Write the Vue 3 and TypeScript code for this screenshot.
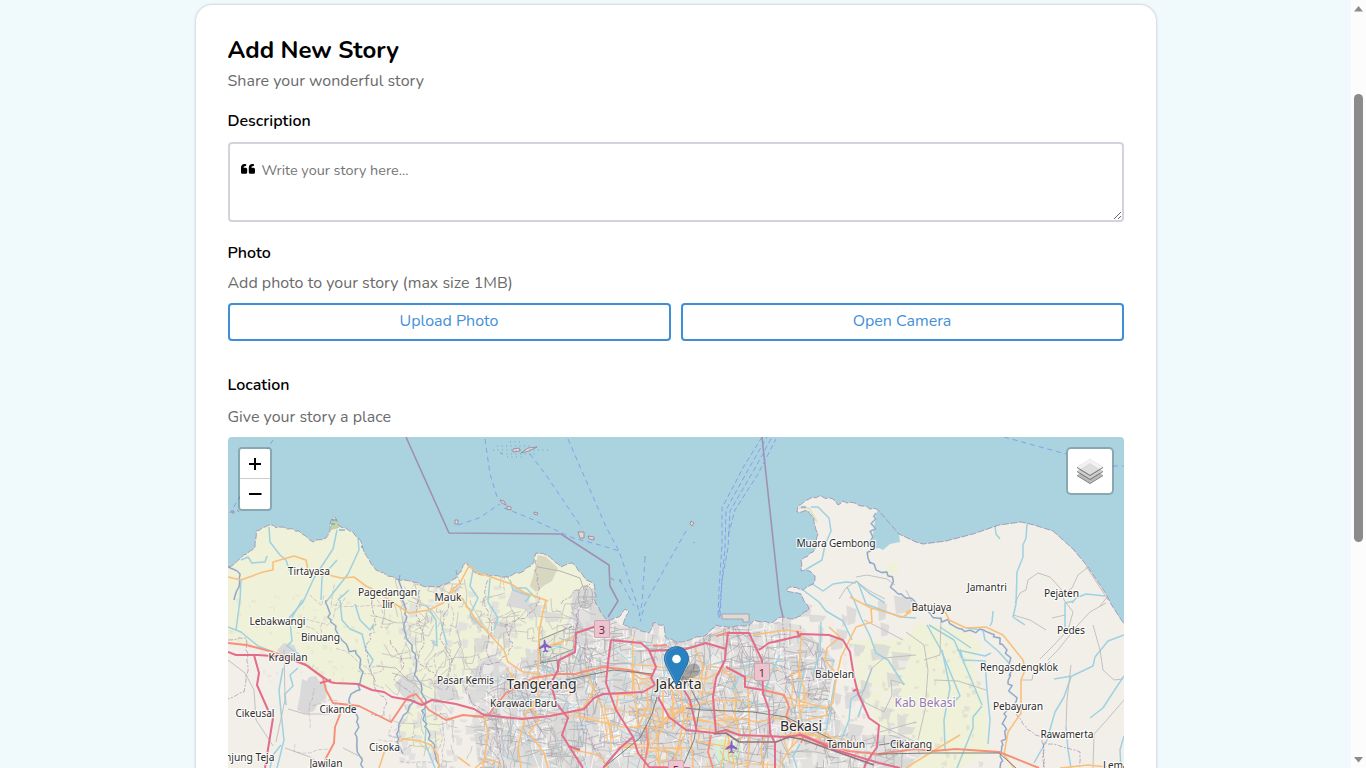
<script setup lang="ts">
interface Line { d: string }
interface Label { t: string; x: number; y: number; w: number; s?: number; c?: string }
type Pt = [number, number]

// Small seeded generator so the street texture is the same on every load.
function makeRandom(seed: number): () => number {
  let s = seed
  return () => {
    s = (s * 1664525 + 1013904223) % 4294967296
    return s / 4294967296
  }
}

function streets(seed: number, count: number, box: number[], step: number, turn: number): string {
  const rnd = makeRandom(seed)
  let d = ''
  for (let i = 0; i < count; i++) {
    let x = box[0] + rnd() * (box[2] - box[0])
    let y = box[1] + rnd() * (box[3] - box[1])
    let a = Math.floor(rnd() * 4) * Math.PI / 2 + (rnd() - 0.5) * 0.7
    d += `M${x.toFixed(1)} ${y.toFixed(1)}`
    const n = 2 + Math.floor(rnd() * 4)
    for (let k = 0; k < n; k++) {
      a += (rnd() - 0.5) * turn
      if (rnd() < 0.25) a += Math.PI / 2
      const len = step * (0.5 + rnd())
      x += Math.cos(a) * len
      y += Math.sin(a) * len
      d += `L${x.toFixed(1)} ${y.toFixed(1)}`
    }
  }
  return d
}

function patches(seed: number, count: number, box: number[], size: number): string {
  const rnd = makeRandom(seed)
  let d = ''
  for (let i = 0; i < count; i++) {
    const x = box[0] + rnd() * (box[2] - box[0])
    const y = box[1] + rnd() * (box[3] - box[1])
    const w = size * (0.3 + rnd())
    const h = size * (0.3 + rnd())
    d += `M${x.toFixed(1)} ${y.toFixed(1)}l${w.toFixed(1)} ${(h * 0.2).toFixed(1)}l${(-w * 0.2).toFixed(1)} ${(h * 0.7).toFixed(1)}l${(-w * 0.7).toFixed(1)} ${(h * 0.1).toFixed(1)}z`
  }
  return d
}

// Adds a fine wiggle between the points of a coast, border or river.
function rough(seed: number, pts: Pt[], amp: number): string {
  const rnd = makeRandom(seed)
  let d = `M${pts[0][0]} ${pts[0][1]}`
  for (let i = 1; i < pts.length; i++) {
    const [ax, ay] = pts[i - 1]
    const [bx, by] = pts[i]
    const n = Math.max(1, Math.round(Math.hypot(bx - ax, by - ay) / 4))
    for (let k = 1; k < n; k++) {
      const t = k / n
      d += `L${(ax + (bx - ax) * t + (rnd() - 0.5) * amp).toFixed(1)} ${(ay + (by - ay) * t + (rnd() - 0.5) * amp).toFixed(1)}`
    }
    d += `L${bx} ${by}`
  }
  return d
}

const coastPts: Pt[] = [
  [228, 568], [241, 558], [250, 551], [255, 547], [256, 531], [269, 525], [299, 531], [313, 542], [326, 538], [330, 531], [331, 520], [335, 517], [339, 526], [353, 532], [361, 541], [364, 552], [376, 570], [396, 579], [413, 582], [426, 587], [439, 587], [456, 578], [466, 562], [474, 572], [489, 576], [509, 577], [524, 571], [534, 562], [536, 553], [546, 555], [561, 567], [572, 563], [584, 577], [594, 584], [596, 604], [603, 615], [608, 620], [619, 617], [625, 609], [629, 612], [623, 625], [639, 630], [649, 633], [653, 623], [664, 625], [665, 637], [676, 642], [686, 641], [694, 638], [706, 635], [716, 625], [732, 627], [749, 625], [754, 620], [769, 623], [783, 617], [794, 619], [803, 613], [809, 610], [804, 601], [801, 594], [786, 591], [789, 587], [803, 590], [813, 584], [815, 576], [810, 571], [801, 571], [801, 560], [813, 552], [816, 544], [818, 534], [814, 519], [808, 511], [797, 512], [798, 506], [809, 499], [819, 496], [833, 499], [838, 505], [843, 501], [863, 506], [878, 510],
]
const eastCoast = 'L899 534 916 542 923 544 946 541 973 534 999 525 1021 522 1034 525 1053 531 1073 549 1088 567 1106 594 1111 604 1124 624'
const coast = rough(7, coastPts, 2.2) + eastCoast
const land = coast + 'V768H228Z'
const urban = 'M480 768 472 720 490 680 530 665 558 640 576 605 596 600 620 625 690 645 720 628 780 622 800 625 835 660 828 700 850 735 905 735 925 752 905 768Z'

const motorways: Line[] = [
  { d: 'M228 652 236 655 258 655 286 657 306 665 330 682 335 683 358 684 372 690 384 692 392 697 410 700 422 705 432 700 456 704 474 709 484 715 522 719 550 716 584 709 594 698 603 694 643 692 655 685 651 678 656 667 649 650 641 643 611 640' },
  { d: 'M649 651 686 649 706 643 726 649 725 660 716 678 713 697 716 733' },
  { d: 'M726 649 728 633 749 633 758 652 762 660 763 693 769 710 770 733 775 743V768' },
  { d: 'M603 624 594 627 576 633 575 652 559 660 558 670 551 683 556 703 568 718 562 735 583 768' },
  { d: 'M611 640 608 663 606 683 616 710 633 737 638 753 649 767 690 768' },
  { d: 'M658 697 669 717 686 730 714 733 726 730 739 735 786 737 801 735 836 750 879 763 900 768' },
  { d: 'M759 650 769 643 799 636 801 634 829 635 843 640 850 652 854 677 858 693 869 718 879 725 877 747 866 763 864 768' },
  { d: 'M726 667 745 677 745 687 763 690M853 691 858 689M797 631 800 637' },
  { d: 'M254 655 259 673 257 685 268 710 273 718 269 743 265 768M568 746 580 750M320 683 331 680' },
  { d: 'M633 737 620 748 603 768M684 690 690 700 694 718 697 732' },
]
const trunks: Line[] = [
  { d: 'M228 643 246 645 273 652 306 665 323 678 326 690 333 703 359 706 373 713 391 722 408 697 416 694 429 710 446 720 463 715 484 717' },
  { d: 'M341 712 335 727 334 743 326 758 322 768' },
  { d: 'M488 715 506 693 533 678 559 674 575 674 603 667 629 670 653 676' },
  { d: 'M646 727 648 744 644 768M716 636 730 632M653 646 667 645' },
  { d: 'M763 690 784 695 789 707 786 717 803 737 801 743M711 735 708 752 713 768' },
  { d: 'M803 735 820 742 848 751 878 754 916 749 933 751 956 749 970 750 999 752 1039 768' },
]
const secondary: Line[] = [
  { d: 'M228 577 241 580 263 572 273 570 273 562 294 556 306 560 308 570 341 578 354 577 366 586 378 592 389 600 409 613 429 610 443 603 451 591 460 583 469 566 476 572 491 577 511 584 523 592 548 601' },
  { d: 'M451 588 463 600 476 620 504 650 508 662 523 672 538 674' },
  { d: 'M546 600 543 612 539 633 538 670 538 700 526 713 518 747 521 768' },
  { d: 'M531 707 539 720 529 733 544 753 548 768M506 668 520 685 545 682 565 688 571 694' },
  { d: 'M578 707 579 717 623 727 656 728 686 708 714 700 743 701M484 715 488 733 483 768' },
  { d: 'M906 613 915 607 932 605 946 613 949 620 966 628 986 627 1003 635 1023 660 1025 670 1021 680V700L1021 713 1008 732 1004 755 1014 768' },
  { d: 'M850 597 871 608 903 617 916 608M871 608 872 622 856 627 841 657 835 685 833 703M829 627 840 637 827 648 825 660 835 672' },
  { d: 'M753 635 786 630 801 632 799 677 804 687 804 700M784 697 826 708 827 715 806 720M826 708 833 703' },
  { d: 'M398 742 404 739 420 741 431 745 438 755 439 768M385 750 379 768M458 757 470 766' },
  { d: 'M906 768 933 751 960 735M1060 768 1088 765 1107 767' },
  { d: 'M610 694 632 695 634 672M618 695 616 712M629 671 641 679 653 678M638 727 648 706 647 688M656 728 667 717 677 712 686 705' },
  { d: 'M673 730V692L660 681M681 690 684 720 673 768M694 646 703 666 700 691M713 721 742 719 757 722 790 716' },
  { d: 'M736 690 735 716 741 740M748 687 750 740 747 768M765 734 761 748 763 768M801 737 788 751 779 768M813 741 826 733 841 746' },
  { d: 'M686 677 706 679 722 671 736 679M686 719 710 722M691 735 693 768M656 728 660 768M663 690 663 728 652 745' },
  { d: 'M574 750 589 753 601 756 608 768M475 768 486 759 498 762 501 768M595 684 590 698 580 712M618 747 650 748 690 748' },
]
const rivers: Line[] = [
  { d: 'M269 527 270 542 280 555 286 560 290 572M241 560 248 557 252 563 265 562 267 556M337 530 333 549 314 578 303 602 289 618M241 580 240 600 236 630' },
  { d: 'M358 537 359 550 348 574 326 602M337 560 322 577 321 600M349 590 338 600M302 600 294 614 290 622 292 641 287 646 300 655' },
  { d: 'M228 627 241 632 258 646 273 652M283 668 279 690 281 712 284 740 277 768M298 668 290 675 293 686 285 694 286 705M270 768 273 755 281 745' },
  { d: 'M340 600 342 620 350 629 362 634 366 650 373 660 369 668M355 604 360 620 370 630 374 624M427 606 436 620 437 646 432 642M441 622 447 645' },
  { d: 'M473 570 470 586 478 598 470 615 482 628M490 578 488 602 498 618 494 630M510 580 513 590 530 596 525 602M515 588 526 588 536 598' },
  { d: 'M811 507 818 507 829 518 831 531 825 545 822 560 805 570M811 583 823 591 833 584 846 582 856 583M803 590 819 602 826 611 843 621 852 640' },
  { d: 'M847 587 854 600 861 618 870 636 876 653 888 660 904 685M856 581 869 593 885 603M858 582 866 604 900 617 916 618' },
  { d: 'M995 526 996 534 1000 539M1027 524 1026 538 1023 545 1023 557 1017 572 1016 604 1013 617 1025 625M1072 603 1076 598 1086 594 1105 596M1065 627 1065 603 1074 601' },
  { d: 'M927 625 941 650 960 696 950 706M929 625 954 640 968 672 982 705M940 627 971 648M957 650 967 652 985 656 991 653M960 649 963 660 985 661 987 690 990 720 988 744' },
  { d: 'M982 706 973 717 973 728 957 768M942 650 950 688 944 720 945 749M993 611 992 622 990 626M967 628 983 630 985 640 998 651 1009 663' },
  { d: 'M1124 635 1108 641 1095 657 1093 666 1072 676 1054 679M1071 677 1064 697 1055 712 1047 740 1034 763M1124 676 1112 694 1103 708 1090 718' },
  { d: 'M1066 727 1068 750 1071 768M1124 736 1120 750 1121 768M872 668 864 690 851 699 849 720 836 753M856 694 864 700 858 717M835 680 831 704 826 731' },
  { d: 'M780 655 770 676 765 695M821 622 820 651 813 675M738 678 733 692M804 670 798 699M800 744 793 756 797 768M425 706 426 727 425 743 435 768' },
]
const purpleRivers: string[] = [
  rough(11, [[326, 600], [331, 620], [338, 634], [348, 648], [360, 658], [361, 678], [360, 690], [351, 694], [349, 702], [358, 718], [357, 740], [363, 768]], 5),
  rough(12, [[400, 575], [405, 607], [404, 629], [412, 645], [416, 670], [421, 692], [426, 700], [423, 720], [430, 735], [438, 768]], 5),
  rough(13, [[876, 513], [871, 540], [868, 558], [876, 570], [888, 576], [894, 590], [906, 598], [916, 607], [941, 618], [962, 629], [985, 631], [1000, 638], [1007, 650], [1012, 670], [1008, 684], [1016, 702], [1004, 714], [1004, 725], [1003, 745], [1000, 768]], 6),
  rough(14, [[228, 566], [240, 574], [239, 587], [234, 600]], 2),
  rough(15, [[415, 700], [400, 722], [397, 742], [403, 754]], 3),
]
const admin: string[] = [
  rough(21, [[456, 570], [461, 585], [450, 596], [444, 620], [440, 640], [452, 660], [446, 690]], 3),
  rough(22, [[536, 560], [537, 580], [540, 600], [528, 615], [505, 625], [512, 648], [500, 662], [482, 664], [480, 680], [466, 688], [474, 705], [489, 714], [500, 738], [498, 768]], 4),
  rough(23, [[561, 604], [576, 590], [590, 584], [578, 612], [576, 640], [590, 660], [600, 690], [585, 705], [582, 728], [598, 750], [610, 768]], 4),
  rough(24, [[783, 617], [785, 650], [786, 690], [776, 712], [764, 730], [763, 768]], 3),
  rough(25, [[786, 680], [810, 678], [808, 698], [829, 700], [828, 716]], 2),
  rough(26, [[228, 640], [246, 638], [248, 668], [244, 692], [228, 699]], 2),
  rough(27, [[372, 600], [376, 625], [366, 646], [376, 690], [386, 700], [384, 716], [371, 714]], 4),
  rough(28, [[1016, 713], [1028, 730], [1042, 738], [1044, 768], [1044, 742], [1080, 752], [1080, 768]], 2),
  rough(29, [[664, 690], [690, 705], [688, 740], [700, 768]], 4),
  rough(30, [[390, 640], [404, 664], [394, 680], [412, 694]], 3),
  rough(31, [[488, 580], [484, 604], [492, 624], [486, 650], [492, 664]], 3),
  rough(32, [[420, 590], [416, 612], [424, 640], [418, 660], [436, 676]], 3),
]
const greyRoads: Line[] = [
  { d: 'M228 660 245 673 254 690 256 720 266 735 273 746M284 650 285 700 276 742' },
  { d: 'M1015 603 1020 593 1026 590 1028 580 1038 573 1050 577 1061 589 1064 600 1073 612 1068 630 1051 648 1040 659M1088 567 1078 575 1072 588 1062 595' },
  { d: 'M1124 700 1105 722 1094 734 1093 768M1071 665 1067 700 1066 727M1106 603 1090 612 1077 626 1058 650 1048 660M1100 606 1108 596M1052 618 1065 615' },
  { d: 'M1025 670 1046 666 1050 661M1021 680 1032 680 1033 674M1013 615 1030 620 1046 630M1093 625 1100 650 1103 670 1114 680 1123 679M1086 566 1108 600' },
  { d: 'M906 632 924 645 928 670 925 710 918 740M934 680 958 681 986 690M864 620 884 630 903 640M916 655 884 658 872 668 860 700 884 712 892 695 891 680 905 684' },
  { d: 'M856 577 867 575 887 579 895 585M856 581 846 588 839 599M856 581 868 590 885 599M392 673 402 676 415 684 M376 666 396 668 408 680M288 709 305 714 330 714' },
  { d: 'M285 748 310 757 326 768M343 748 363 758M906 590 912 602M941 618 940 655 924 660M880 732 916 722M879 725 916 742M457 630 461 645 450 665' },
]
const labels: Label[] = [
  { t: 'Tirtayasa', x: 309, y: 574.6, w: 42 }, { t: 'Pagedangan', x: 387.5, y: 596.4, w: 59 }, { t: 'Ilir', x: 388, y: 608.4, w: 12 },
  { t: 'Mauk', x: 448, y: 601, w: 27 }, { t: 'Lebakwangi', x: 277.5, y: 624.7, w: 56 }, { t: 'Binuang', x: 320.5, y: 641.2, w: 39 },
  { t: 'Kragilan', x: 288, y: 661.3, w: 39 }, { t: 'Cikeusal', x: 255, y: 717.4, w: 39 }, { t: 'Cikande', x: 338, y: 712.6, w: 37 },
  { t: 'Cisoka', x: 384.5, y: 750.7, w: 31 }, { t: 'Jawilan', x: 326, y: 766.6, w: 33 }, { t: 'Tanjung Teja', x: 244.5, y: 760.5, w: 60 },
  { t: 'Pasar Kemis', x: 465.5, y: 683.8, w: 57 }, { t: 'Karawaci Baru', x: 523.5, y: 706.8, w: 67 }, { t: 'Muara Gembong', x: 836, y: 547.4, w: 79 },
  { t: 'Jamantri', x: 987, y: 590.8, w: 40 }, { t: 'Pejaten', x: 1061.5, y: 596.6, w: 35 }, { t: 'Batujaya', x: 931.5, y: 611.4, w: 40 },
  { t: 'Pedes', x: 1071, y: 633.6, w: 28 }, { t: 'Rengasdengklok', x: 1019, y: 670.8, w: 78 }, { t: 'Pebayuran', x: 1018, y: 709.6, w: 50 },
  { t: 'Rawamerta', x: 1067, y: 737.6, w: 53 }, { t: 'Lemahabang', x: 1133, y: 768.6, w: 60 }, { t: 'Babelan', x: 834.5, y: 678, w: 39 },
  { t: 'Tambun', x: 846, y: 747.6, w: 38 }, { t: 'Cikarang', x: 911, y: 747.6, w: 42 },
  { t: 'Kab Bekasi', x: 925, y: 707, w: 61, s: 12, c: '#9a7aae' },
  { t: 'Tangerang', x: 541.5, y: 689, w: 70, s: 14 }, { t: 'Jakarta', x: 678.5, y: 689, w: 46, s: 14 }, { t: 'Bekasi', x: 801, y: 731, w: 42, s: 14 },
]
const shields = [{ t: '3', x: 602, y: 629 }, { t: '1', x: 762, y: 672 }, { t: '5', x: 676, y: 769 }]
const planes = [{ x: 545, y: 646, r: -5 }, { x: 731.5, y: 747, r: 0 }]

const urbanStreets = streets(3, 720, [480, 600, 925, 768], 7, 0.4)
const urbanLight = streets(4, 300, [480, 600, 925, 768], 7, 0.4)
const urbanBorders = streets(19, 70, [480, 620, 880, 768], 8, 1)
const urbanPatches = patches(5, 260, [465, 595, 900, 768], 16)
const urbanOpen = patches(6, 130, [480, 640, 900, 768], 10)
const ruralStreets = streets(8, 190, [395, 585, 600, 768], 7, 0.8)
const ruralBorders = streets(20, 40, [300, 590, 520, 768], 8, 1)
const ruralPatches = patches(9, 170, [395, 585, 560, 768], 8)
const westPatches = patches(10, 80, [228, 590, 400, 680], 4)
const eastPatches = patches(16, 90, [835, 640, 985, 768], 5)
const urbanRoads = streets(17, 36, [600, 675, 830, 768], 14, 0.4)
const canals = streets(18, 70, [480, 640, 900, 768], 9, 0.8)
const ferries = [
  'M485 439 490 474 498 500M458 525 479 518 500 504M504 508 527 517 573 538 600 545 619 551M530 454 546 475 582 528M568 439 591 492 606 527 619 551 637 604 640 616',
  'M686 531 665 568 645 604 640 622M645 558 642 604 639 616M620 580 634 606M1004 437 1066 454M1113 466H1124M273 440 266 451M241 495 230 513',
]
const lanes = [
  'M762 437 744 466 722 508 722 545 719 590 718 618', 'M767 437 748 470 726 510 725 548 721 592 719 618',
  'M772 437 754 470 730 511 728 548 722 580 720 618', 'M776 439 758 474 735 510 728 536',
]
</script>

<template>
  <div class="page">
    <main class="content">
      <section class="card">
        <h1>Add New Story</h1>
        <p class="hint lead">Share your wonderful story</p>

        <label class="label desc" for="story">Description</label>
        <div class="story-field">
          <svg class="quote" viewBox="0 0 14 10" width="14" height="10">
            <path d="M0 3.8Q0 .2 3.6 0H4.6Q5.2 0 5.2.6V1.3Q5.2 2 4.5 2 2.5 2 2.5 3.7H4.7Q6.2 3.7 6.2 5.2V8.3Q6.2 9.8 4.7 9.8H1.5Q0 9.8 0 8.3Z" />
            <path transform="translate(7.8)" d="M0 3.8Q0 .2 3.6 0H4.6Q5.2 0 5.2.6V1.3Q5.2 2 4.5 2 2.5 2 2.5 3.7H4.7Q6.2 3.7 6.2 5.2V8.3Q6.2 9.8 4.7 9.8H1.5Q0 9.8 0 8.3Z" />
          </svg>
          <textarea id="story" placeholder="Write your story here..."></textarea>
        </div>

        <h2 class="label photo">Photo</h2>
        <p class="hint photo-hint">Add photo to your story (max size 1MB)</p>
        <div class="actions">
          <button type="button">Upload Photo</button>
          <button type="button">Open Camera</button>
        </div>

        <h2 class="label location">Location</h2>
        <p class="hint place-hint">Give your story a place</p>

        <div class="map">
          <svg class="tiles" viewBox="228 437 896 331" width="896" height="331">
            <defs>
              <clipPath id="land"><path :d="land" /></clipPath>
              <clipPath id="urban"><path :d="urban" /></clipPath>
            </defs>
            <rect x="228" y="437" width="896" height="331" fill="#aad3df" />
            <path :d="land" fill="#f2efe9" />
            <g clip-path="url(#land)">
              <path d="M228 500H600V640L560 655 505 663 470 688 440 698 400 693 362 684 335 682 300 661 270 653 228 640Z" fill="#eff1d8" />
              <path d="M396 725 405 718 412 706 440 718 444 745 425 752 402 743Z" fill="#eff1d8" />
              <path d="M853 640 906 639 918 622 966 630 982 645 972 661 985 700 989 750 960 768H906L880 730 858 690Z" fill="#eff1d8" />
              <path d="M884 567 897 562 899 573 887 574Z" fill="#eff1d8" />
              <path :d="westPatches" fill="#dfe3d2" opacity=".6" />
              <path :d="eastPatches" fill="#dedbd3" opacity=".75" />
              <path :d="ruralPatches" fill="#dcdcdc" opacity=".75" />
              <path d="M277 650 284 643 294 645 300 659 282 658ZM302 679 307 681 309 677 316 676 319 681 327 685 326 699 317 705 314 711 306 714 297 710 300 695Z" fill="#d9d9d9" />
              <path d="M394 685 402 676 414 675 420 695 408 703ZM433 680 452 678 460 700 440 700ZM470 672 492 654 510 668 500 692 476 691Z" fill="#dadada" />
              <path :d="urban" fill="#e3e1df" />
              <path :d="urbanPatches" fill="#d5d5d5" opacity=".75" />
              <path :d="urbanOpen" fill="#f2efe9" opacity=".7" />
              <path d="M538 555 546 557 558 568 552 581 545 585 536 592 530 586 534 573Z" fill="#d2d1bd" opacity=".8" />
              <path d="M573 590 596 588 595 608 571 610ZM514 585 530 595 528 610 506 606Z" fill="#d9d9d9" />
              <path d="M539 640 573 626 574 649 541 662Z" fill="#e6ead7" stroke="#75756f" stroke-width=".8" />
              <path d="M548 648 573 638M550 645 568 640" stroke="#fbc27c" stroke-width="1.5" />
              <path d="M714 742 728 736 742 743 739 760 718 764Z" fill="#d9eed0" />
              <path d="M330 517 337 520 339 528 331 530Z" fill="#c4d3a5" />
              <path d="M799 508 809 508 817 522" fill="none" stroke="#dfe4b8" stroke-width="2" />
              <g fill="none" clip-path="url(#urban)">
                <path :d="urbanLight" stroke="#fff" stroke-width="1" opacity=".8" />
                <path :d="urbanStreets" stroke="#b3b1b3" stroke-width=".8" />
                <path :d="urbanBorders" stroke="#a58fb0" stroke-width=".8" opacity=".65" />
                <path :d="canals" stroke="#9fcfdf" stroke-width="1" opacity=".8" />
                <path :d="urbanRoads" stroke="#fbc27c" stroke-width="1.2" />
              </g>
              <path :d="ruralStreets" fill="none" stroke="#bdbbbd" stroke-width=".7" />
              <path :d="ruralBorders" fill="none" stroke="#a58fb0" stroke-width=".8" stroke-dasharray="4 1.5" opacity=".5" />
            </g>
            <path d="M878 510 899 534 900 542 890 544 883 550 879 548 871 549 876 514Z" fill="#aad3df" />
            <path d="M722 614H749V622H743V619H722Z" fill="#dedbd3" stroke="#9d7fa8" stroke-width=".6" />
            <g fill="none" stroke-linejoin="round">
              <path v-for="(r, i) in rivers" :key="'r' + i" :d="r.d" stroke="#9ed1e1" stroke-width="1.5" />
              <path v-for="(r, i) in greyRoads" :key="'g' + i" :d="r.d" stroke="#bdbbbc" stroke-width=".9" />
              <g v-for="(r, i) in purpleRivers" :key="'p' + i">
                <path :d="r" stroke="#a8cfe0" stroke-width="1.8" />
                <path :d="r" stroke="#988bae" stroke-width="1" opacity=".75" />
              </g>
              <path v-for="(a, i) in admin" :key="'a' + i" :d="a" stroke="#9d7fa8" stroke-width="1" stroke-dasharray="5 1.5 2 1.5" opacity=".6" />
              <path :d="coast" stroke="#9585a8" stroke-width="1" stroke-dasharray="7 1.5" opacity=".75" />
              <path d="M579 597a7 8 0 1 0 13 0 7 8 0 1 0-13 0M538 567 560 571 580 578 584 590M585 586V606M577 597H595" stroke="#b4b4b4" stroke-width="1" />
              <path v-for="(s, i) in secondary" :key="'s' + i" :d="s.d" stroke="#f9c07d" stroke-width="1.6" />
              <path v-for="(t, i) in trunks" :key="'t' + i" :d="t.d" stroke="#f68f76" stroke-width="1.9" />
              <path d="M540 663 557 660 558 672M566 680 613 670 653 674M686 708 703 710 753 712 786 717 819 733 845 746M657 697 652 714 640 738 618 756 603 768M686 680 700 706 694 740 682 768M878 754 933 753 999 753 1016 768M879 745 906 741" stroke="#808080" stroke-width="1" />
              <path v-for="(m, i) in motorways" :key="'m' + i" :d="m.d" stroke="#e46c88" stroke-width="2" />
              <path d="M714 734 726 733 739 742 776 742 789 737 801 739 874 765" stroke="#94747d" stroke-width="1.7" />
              <path d="M406 437 449 533 561 534 609 565 610 586 618 601 608 617M762 437 780 604 783 617" stroke="#a191b0" stroke-width="1.6" />
              <path v-for="(f, i) in ferries" :key="'f' + i" :d="f" stroke="#7d9ceb" stroke-width=".9" stroke-dasharray="5 4" />
              <path v-for="(l, i) in lanes" :key="'l' + i" :d="l" stroke="#859fec" stroke-width="1" stroke-dasharray="5 3" :stroke-dashoffset="i * 3" />
            </g>
            <g fill="#e0ddd0" stroke="#9b7b99" stroke-width=".8">
              <path d="M500 500 504 501 506 505 502 503ZM507 506 511 507 511 510 507 509ZM534 512 538 513 537 515 534 514ZM578 532H584V538H580ZM588 536 594 537 594 540 589 539ZM455 520H458V524H455ZM691 521 694 523 692 526 690 524ZM232 511H234V513H232ZM237 510 239 512" />
              <path d="M513 449 519 448 520 451 513 452ZM521 453 528 448 537 447 529 451ZM645 556V558M611 578 614 580M620 579V582M694 542V543M500 453H502" />
            </g>
            <path d="M493 450H550M497 446H533M502 454H535M510 442H520M507 457H525" stroke="#5b9fc4" stroke-width=".8" stroke-dasharray="1 3.5" />
            <path d="M332 520H337M331 524H335M339 530H345M361 547H363M801 507H806" stroke="#4d94dd" stroke-width="1" />
            <g v-for="p in planes" :key="p.x" :transform="`translate(${p.x} ${p.y}) rotate(${p.r})`" fill="#8461c4">
              <path d="M0-6.5Q1.2-6 1.1-2.3L6 1.3V2.8L1.1 1.2.7 3.9 2.8 5.4V6.4L0 5.6-2.8 6.4V5.4L-.7 3.9-1.1 1.2-6 2.8V1.3L-1.1-2.3Q-1.2-6 0-6.5Z" />
            </g>
            <g v-for="s in shields" :key="s.t">
              <rect :x="s.x - 7.5" :y="s.y - 8.5" width="15" height="17" rx="1.5" fill="#eac4cf" stroke="#d7a3b2" />
              <text :x="s.x" :y="s.y + 4.5" text-anchor="middle" font-size="11" fill="#71243e">{{ s.t }}</text>
            </g>
            <path d="M677 686 686 669Q690 662 697 664 702 668 699 675L686 681Z" fill="#222" opacity=".3" />
            <text v-for="l in labels" :key="l.t" :x="l.x" :y="l.y" :font-size="l.s || 10.3" :fill="l.c || '#2d2d2d'" :textLength="l.w" text-anchor="middle" class="place">{{ l.t }}</text>
            <g transform="translate(0 .7)">
              <path d="M676.5 646C669.8 646 664.5 651.3 664.5 658 664.5 661.7 666.5 665.3 668.2 668.4L676.5 684.8 684.8 668.4C686.5 665.3 688.5 661.7 688.5 658 688.5 651.3 683.2 646 676.5 646Z" fill="#2a81bf" stroke="#2b6d9f" stroke-width="1" />
              <path d="M676.5 647C670.4 647 665.5 652 665.5 658 665.5 661.5 667.4 664.9 669 668L676.5 682.5" fill="none" stroke="#5aa3d4" stroke-width="1" opacity=".7" />
              <circle cx="676.5" cy="658.3" r="4.3" fill="#fff" />
            </g>
          </svg>

          <div class="zoom">
            <button type="button" aria-label="Zoom in"><svg width="14" height="14"><path d="M1 7H13M7 1V13" /></svg></button>
            <button type="button" aria-label="Zoom out"><svg width="14" height="14"><path d="M1 7H13.5" /></svg></button>
          </div>
          <button type="button" class="layers" aria-label="Layers">
            <svg width="26" height="26" viewBox="0 0 26 26">
              <path fill="#b9b9b9" d="m.032 17.056 13-8 13 8-13 8z" /><path fill="#737373" d="m.032 17.056-.032.93 13 8 13-8 .032-.93-13 8z" />
              <path fill="#cdcdcd" d="m0 13.076 13-8 13 8-13 8z" /><path fill="#737373" d="M0 13.076v.91l13 8 13-8v-.91l-13 8z" />
              <path fill="#e9e9e9" fill-opacity=".585" stroke="#797979" stroke-width=".1" d="m0 8.986 13-8 13 8-13 8-13-8" />
              <path fill="#737373" d="M0 8.986v.91l13 8 13-8v-.91l-13 8z" />
            </svg>
          </button>
        </div>
      </section>
    </main>
    <div class="scrollbar">
      <svg width="9" height="6"><path d="M0 5.5 4.5 0 9 5.5Z" /></svg>
      <div class="thumb"></div>
      <svg class="down" width="9" height="6"><path d="M0 0 4.5 5.5 9 0Z" /></svg>
    </div>
  </div>
</template>

<style>
html, body { margin: 0; overflow: hidden; }
</style>

<style scoped>
* { box-sizing: border-box; }
.page { display: flex; width: 1366px; height: 768px; overflow: hidden; background: #f0f9fc; font-family: Nunito, Lato, "Open Sans", sans-serif; font-size: 16px; color: #000; }
.content { flex: 1; display: flex; justify-content: center; padding-top: 5px; }
.card { width: 960px; height: 900px; padding: 27px 32px; border-radius: 16px; background: #fff; box-shadow: 0 0 3px rgba(0, 0, 0, .27); }
h1 { margin: 0; font-size: 24px; line-height: 36px; font-weight: 700; }
p, h2 { margin: 0; line-height: 24px; }
.hint { color: #6b6b6b; font-size: 16px; }
.lead { margin-top: 1px; }
.label { display: block; font-size: 16px; line-height: 24px; font-weight: 600; }
.desc { margin-top: 16px; }
.story-field { position: relative; height: 80px; margin-top: 9px; }
textarea { display: block; width: 896px; height: 80px; padding: 16px 12px 8px 32px; border: 2px solid #d1d5db; border-radius: 4px; outline: none; resize: vertical; font: 14.4px/21px Nunito, Lato, sans-serif; background: #fff; }
textarea::placeholder { color: #757575; opacity: 1; }
.quote { position: absolute; left: 13px; top: 22px; }
.photo { margin-top: 19px; }
.photo-hint { margin-top: 6px; }
.actions { display: flex; gap: 10px; margin-top: 8px; }
.actions button { flex: 1; height: 38px; padding: 0 0 3px; border: 2px solid #3f8fd6; border-radius: 4px; background: #fff; color: #4490d8; font: 16px/24px Nunito, Lato, sans-serif; }
.location { margin-top: 32px; }
.place-hint { margin-top: 8px; }
.map { position: relative; width: 896px; height: 331px; margin-top: 8px; border-radius: 4px 4px 0 0; overflow: hidden; }
.tiles { display: block; font-family: "Noto Sans", sans-serif; }
.place { paint-order: stroke; stroke: rgba(255, 255, 255, .75); stroke-width: 2.4px; stroke-linejoin: round; }
.zoom { position: absolute; left: 10px; top: 10px; width: 34px; border: 2px solid rgba(0, 0, 0, .2); border-radius: 4px; background-clip: padding-box; }
.zoom button { display: flex; align-items: center; justify-content: center; width: 30px; height: 30px; padding: 0; border: 0; background: #fff; border-radius: 0 0 2px 2px; }
.zoom button:first-child { border-bottom: 1px solid #ccc; border-radius: 2px 2px 0 0; }
.zoom path { stroke: #000; stroke-width: 2; fill: none; }
.layers { position: absolute; right: 10px; top: 10px; display: flex; align-items: center; justify-content: center; width: 48px; height: 48px; padding: 0; border: 2px solid rgba(0, 0, 0, .2); border-radius: 5px; background: #fff; background-clip: padding-box; }
.scrollbar { display: flex; flex-direction: column; align-items: center; width: 15px; padding: 6px 0 5px; background: #fcfcfc; }
.scrollbar svg { flex: none; fill: #8b8b8b; }
.thumb { width: 9px; height: 448px; margin-top: 82px; border-radius: 5px; background: #8b8b8b; }
.down { margin-top: auto; }
</style>
